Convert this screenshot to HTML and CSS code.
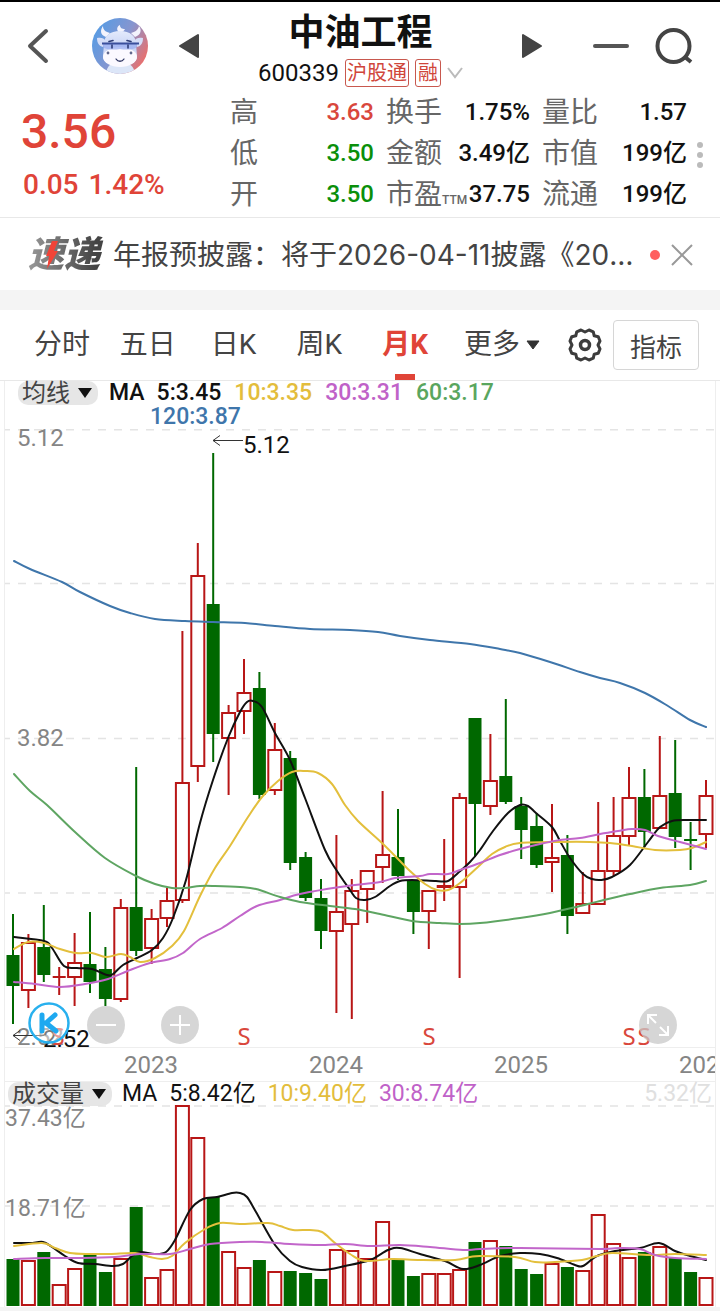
FILE: index.html
```html
<!DOCTYPE html>
<html lang="zh-CN">
<head>
<meta charset="utf-8">
<meta name="viewport" content="width=device-width, initial-scale=1">
<title>中油工程 600339</title>
<link rel="stylesheet" href="styles.css">
</head>
<body>
<main class="page">
  <header class="topbar">
    <button class="icon-btn back" aria-label="返回">
      <svg width="22" height="36" viewBox="0 0 22 36"><path d="M19 3 3 18l16 15" fill="none" stroke="#555" stroke-width="4" stroke-linecap="round" stroke-linejoin="round"/></svg>
    </button>
    <svg class="avatar" width="56" height="56" viewBox="0 0 56 56" role="img" aria-label="头像">
      <defs>
        <linearGradient id="sky" x1="0.1" y1="0.2" x2="1" y2="0.7"><stop offset="0" stop-color="#5b9be2"/><stop offset=".5" stop-color="#8795cf"/><stop offset="1" stop-color="#ee6d68"/></linearGradient>
        <linearGradient id="fur" x1="0" y1="0" x2="0" y2="1"><stop offset="0" stop-color="#e4ebfc"/><stop offset=".5" stop-color="#c6d2f5"/><stop offset="1" stop-color="#f8f5fb"/></linearGradient>
        <clipPath id="round"><circle cx="28" cy="28" r="28"/></clipPath>
      </defs>
      <g clip-path="url(#round)">
        <path fill="url(#sky)" d="M0 0h56v56H0z"/>
        <path d="M14 58c0-9 4-14 14-14s15 5 15 14z" fill="#dce6f8"/>
        <path d="M14 19c-6-2-6-7-3-11 0 4 3 6 7 7zM43 19c6-2 7-7 4-11-1 4-4 6-8 7zM27 14c-3-2-2-6 1-7 0 3 2 4 5 4-1 2-3 4-6 3z" fill="#f3f3fd"/>
        <path d="M5 20c4-1 7 0 9 3l-3 6c-4-1-6-4-6-9zM51 20c-4-1-7 0-9 3l3 6c4-1 6-4 6-9z" fill="#d6def8"/>
        <path d="M12 26c0-8 6-13 16-13s16 5 16 13l1 12c0 7-7 9-17 9s-17-2-17-9z" fill="url(#fur)"/>
        <ellipse cx="28" cy="39" rx="17" ry="10" fill="#fbf9ff"/>
        <path d="M11 25h34v4c-3 3-12 3-17 2-6 1-14 1-17-2z" fill="#9aaef0" opacity=".75"/>
        <path d="M10 25.500h37" stroke="#3a4f9c" stroke-width="1.800"/>
        <path d="M17 23.500l4-1M35 22.500l4 1M20 27v3M36 27v3" stroke="#2e3c77" stroke-width="1.600" stroke-linecap="round"/>
        <circle cx="16" cy="35" r="1.400" fill="#60678d"/><circle cx="39" cy="35" r="1.400" fill="#60678d"/>
        <path d="M24 41c2 3 6 3 8 0" fill="none" stroke="#333a66" stroke-width="1.300" stroke-linecap="round"/>
      </g>
    </svg>
    <button class="icon-btn prev" aria-label="上一只">
      <svg width="22" height="26" viewBox="0 0 22 26"><path d="M20 2v22L2 13z" fill="#444" stroke="#444" stroke-width="2" stroke-linejoin="round"/></svg>
    </button>
    <div class="stock">
      <h1 class="stock-name">中油工程</h1>
      <div class="stock-meta">
        <span class="stock-code">600339</span>
        <span class="tag">沪股通</span>
        <span class="tag">融</span>
        <svg width="16" height="12" viewBox="0 0 16 12"><path d="M1 1l7 9 7-9" fill="none" stroke="#bbb" stroke-width="2"/></svg>
      </div>
    </div>
    <button class="icon-btn next" aria-label="下一只">
      <svg width="22" height="26" viewBox="0 0 22 26"><path d="M2 2v22l18-11z" fill="#444" stroke="#444" stroke-width="2" stroke-linejoin="round"/></svg>
    </button>
    <button class="icon-btn minus" aria-label="移除自选">
      <svg width="36" height="4" viewBox="0 0 36 4"><rect width="36" height="4" rx="2" fill="#555"/></svg>
    </button>
    <button class="icon-btn" aria-label="搜索">
      <svg width="38" height="38" viewBox="0 0 38 38"><circle cx="18.500" cy="19" r="16" fill="none" stroke="#444" stroke-width="4"/><path d="M30 30l6 5" stroke="#444" stroke-width="4"/></svg>
    </button>
  </header>

  <section class="quote">
    <div class="price-box">
      <div class="price">3.56</div>
      <div class="change"><span>0.05</span><span>1.42%</span></div>
    </div>
    <dl class="stats">
      <dt>高</dt><dd class="up">3.63</dd><dt>换手</dt><dd>1.75%</dd><dt>量比</dt><dd>1.57</dd>
      <dt>低</dt><dd class="down">3.50</dd><dt>金额</dt><dd>3.49亿</dd><dt>市值</dt><dd>199亿</dd>
      <dt>开</dt><dd class="down">3.50</dd><dt>市盈<small class="ttm">TTM</small></dt><dd>37.75</dd><dt>流通</dt><dd>199亿</dd>
    </dl>
    <button class="icon-btn dots" aria-label="更多数据">
      <svg width="8" height="28" viewBox="0 0 8 28" fill="#bbb"><circle cx="4" cy="4" r="3"/><circle cx="4" cy="14" r="3"/><circle cx="4" cy="24" r="3"/></svg>
    </button>
  </section>

  <section class="news">
    <span class="news-logo">速递
      <svg class="bolt" width="12" height="28" viewBox="0 0 12 28"><path d="M6 0h6L8 10h4L1 28l2-13H0z" fill="#f04438"/></svg>
    </span>
    <p class="news-text">年报预披露：将于2026-04-11披露《2025年年度报告》</p>
    <span class="news-dot"></span>
    <button class="icon-btn" aria-label="关闭">
      <svg width="22" height="22" viewBox="0 0 22 22"><path d="M1 1l20 20M21 1L1 21" stroke="#999" stroke-width="2"/></svg>
    </button>
  </section>

  <nav class="tabs">
    <button class="tab">分时</button>
    <button class="tab">五日</button>
    <button class="tab">日K</button>
    <button class="tab">周K</button>
    <button class="tab active">月K</button>
    <button class="tab more">更多<svg width="14" height="10" viewBox="0 0 14 10"><path d="M1 1h12L7 9z" fill="#333" stroke="#333" stroke-linejoin="round"/></svg></button>
    <button class="icon-btn gear" aria-label="设置">
      <svg width="34" height="34" viewBox="-17 -17 34 34" fill="none" stroke="#3c3c3c" stroke-linejoin="round">
        <path stroke-width="3" d="M0-13 4-15 8.300-13.200 9.200-9.200 13.200-8.300 15-4 13 0 15 4 13.200 8.300 9.200 9.200 8.300 13.200 4 15 0 13-4 15-8.300 13.200-9.200 9.200-13.200 8.300-15 4-13 0-15-4-13.200-8.300-9.200-9.200-8.300-13.200-4-15z"/>
        <circle r="4.500" stroke-width="3.500"/>
      </svg>
    </button>
    <button class="indicator">指标</button>
  </nav>

  <section class="chart">
    <div class="legend">
      <button class="pill">均线<svg width="14" height="10" viewBox="0 0 14 10"><path d="M0 0h14L7 10z" fill="#111"/></svg></button>
      <div class="legend-items">
        <span class="ma">MA</span>
        <span class="legend-rest"><span class="m5">5:3.45</span><span class="m10">10:3.35</span><span class="m30">30:3.31</span><span class="m60">60:3.17</span></span>
        <span class="m120">120:3.87</span>
      </div>
    </div>
    <div class="plot">
      <svg id="price" class="canvas" viewBox="5 429 710 652" role="img" aria-label="月K线图"></svg>
      <span class="k-badge"><svg width="42" height="42" viewBox="0 0 42 42"><circle cx="21" cy="21" r="19.500" fill="#fff" fill-opacity=".45" stroke="#28b0ee" stroke-width="2.500"/><path d="M14 13v16M27 13l-9 8 10 8M14 21h4" fill="none" stroke="#1fa9f0" stroke-width="5" stroke-linecap="round" stroke-linejoin="round"/></svg></span>
      <button class="round-btn zoom-out" aria-label="缩小"><svg width="20" height="20" viewBox="0 0 20 20"><path d="M0 10h20" stroke="#fff" stroke-width="2"/></svg></button>
      <button class="round-btn zoom-in" aria-label="放大"><svg width="20" height="20" viewBox="0 0 20 20"><path d="M0 10h20M10 0v20" stroke="#fff" stroke-width="2"/></svg></button>
      <button class="round-btn expand" aria-label="全屏"><svg width="22" height="22" viewBox="0 0 22 22"><path d="M1 10V1h9M1 1l8 8M21 12v9h-9M21 21l-8-8" fill="none" stroke="#fff" stroke-width="2"/></svg></button>
    </div>
    <div class="legend volume-legend">
      <button class="pill">成交量<svg width="14" height="10" viewBox="0 0 14 10"><path d="M0 0h14L7 10z" fill="#111"/></svg></button>
      <span class="ma">MA</span>
      <span class="m5">5:8.42亿</span><span class="m10">10:9.40亿</span><span class="m30">30:8.74亿</span>
      <span class="last">5.32亿</span>
    </div>
    <svg id="volume" class="canvas" viewBox="5 1105 710 202" role="img" aria-label="成交量图"></svg>
  </section>
</main>
<script src="chart.js"></script>
</body>
</html>
```
FILE: styles.css
```css
* { box-sizing: border-box; }

body {
  margin: 0;
  background: #f4f4f4;
  color: #111;
  font-family: Roboto, "Noto Sans CJK SC", sans-serif;
  font-size: 24px;
}

button {
  font: inherit;
  color: inherit;
  border: 0;
  padding: 0;
  background: none;
}

svg { display: block; flex: none; }

.page {
  background: #fff;
  border-top: 2px solid #000;
}

.icon-btn {
  display: flex;
  align-items: center;
  justify-content: center;
  flex: none;
}

/* top bar */
.topbar {
  display: flex;
  align-items: center;
  height: 88px;
  padding: 0 27px;
}

.avatar { margin-left: 43px; }
.prev { margin-left: 30px; }
.minus { margin: 0 26px 0 50px; }

.stock {
  flex: 1;
  align-self: flex-start;
  display: flex;
  flex-direction: column;
  align-items: center;
  padding-top: 10px;
}

.stock-name {
  margin: 0;
  font-size: 36px;
  line-height: 42px;
  font-weight: 700;
}

.stock-meta {
  display: flex;
  align-items: center;
  gap: 6px;
  height: 38px;
}

.stock-code { font-size: 24px; }

.tag {
  border: 1px solid #c8584e;
  border-radius: 3px;
  padding: 0 1px;
  font-size: 20px;
  line-height: 26px;
  color: #d0463b;
}

.tag + .tag { padding: 0 2px; }

/* quote */
.quote {
  display: flex;
  height: 128px;
  padding: 2px 16px 0 21px;
  border-bottom: 1px solid #e8e8e8;
}

.price-box {
  width: 209px;
  padding-top: 14px;
  color: #e04438;
  font-weight: 500;
}

.price {
  font-size: 48px;
  line-height: 52px;
}

.change {
  display: flex;
  gap: 10px;
  padding-left: 2px;
  font-size: 28px;
  line-height: 54px;
}

.stats {
  flex: 1;
  display: grid;
  grid-template-columns: 28px 116px 67px 89px 67px 1fr;
  grid-auto-rows: 41px;
  margin: 0;
  line-height: 41px;
}

.stats dt {
  font-size: 28px;
  color: #666;
  white-space: nowrap;
}

.stats dt:nth-of-type(3n + 2),
.stats dt:nth-of-type(3n) { margin-left: 12px; }

.stats dd {
  margin: 0;
  font-weight: 500;
  text-align: right;
  white-space: nowrap;
}

.ttm { font-size: 12px; font-weight: 500; }
.stats .up { color: #d9473c; }
.stats .down { color: #0a8f0a; }
.dots { padding-left: 9px; }

/* news */
.news {
  display: flex;
  align-items: center;
  height: 72px;
  padding: 2px 27px 0 28px;
}

.news-logo {
  position: relative;
  flex: none;
  width: 85px;
  font-size: 36px;
  line-height: 40px;
  font-style: italic;
  font-weight: 900;
  color: transparent;
  background: linear-gradient(90deg, #999, #444 80%);
  background-clip: text;
  -webkit-background-clip: text;
}

.bolt {
  position: absolute;
  left: 18px;
  top: 6px;
}

.news-text {
  flex: 1;
  min-width: 0;
  margin: 0;
  font-family: Inter, "Noto Sans CJK SC", sans-serif;
  font-size: 28px;
  line-height: 40px;
  color: #444;
  white-space: nowrap;
  overflow: hidden;
  text-overflow: ellipsis;
}

.news-dot {
  flex: none;
  width: 10px;
  height: 10px;
  margin: 0 11px 0 12px;
  border-radius: 50%;
  background: #ff5f5f;
}

/* period tabs */
.tabs {
  display: flex;
  align-items: stretch;
  height: 91px;
  padding: 0 21px 0 19px;
  border-top: 20px solid #f4f4f4;
  border-bottom: 1px solid #e8e8e8;
}

.tab {
  position: relative;
  flex: 1;
  font-size: 28px;
  line-height: 68px;
  color: #444;
  white-space: nowrap;
}

.tab.active { font-weight: 700; color: #e04438; }

.tab.active::after {
  content: "";
  position: absolute;
  left: 50%;
  bottom: 0;
  width: 20px;
  height: 6px;
  margin-left: -10px;
  background: #e04438;
}

.tab.more {
  flex: none;
  display: flex;
  align-items: center;
  gap: 6px;
  margin: 0 28px 0 16px;
}

.gear { margin-right: 11px; }

.indicator {
  align-self: center;
  width: 86px;
  height: 50px;
  border: 1px solid #d6d6d6;
  border-radius: 4px;
  font-size: 26px;
  color: #444;
}

/* charts */
.chart {
  margin: 0 4px;
  border: solid #eee;
  border-width: 0 1px;
}

.canvas { width: 100%; height: auto; }

.legend {
  display: flex;
  align-items: flex-start;
  height: 48px;
  padding-left: 13px;
  font-size: 23px;
  line-height: 24px;
  font-weight: 500;
  white-space: nowrap;
}

.pill {
  display: flex;
  align-items: center;
  gap: 8px;
  height: 24px;
  margin-right: 11px;
  padding: 0 6px 0 4px;
  border-radius: 10px;
  background: #e6e6e6;
  color: #444;
  font-size: 24px;
  font-weight: 400;
  line-height: 24px;
}

.legend-items {
  display: grid;
  grid-template-columns: auto auto;
  column-gap: 12px;
}

.legend-rest { display: flex; gap: 13px; }
.m120 { grid-column: 1 / -1; padding-left: 41px; color: #3f76ab; }
.m10 { color: #e3bd3c; }
.m30 { color: #c062c8; }
.m60 { color: #5aa65e; }

.volume-legend {
  height: 24px;
  gap: 12px;
  padding: 0 3px 0 3px;
  border-top: 1px solid #eee;
  font-weight: 400;
}

.volume-legend .pill { margin-right: -2px; }
.last { margin-left: auto; color: #e0e0e0; }

.plot { position: relative; }

.k-badge,
.round-btn {
  position: absolute;
  bottom: 37px;
}

.k-badge { left: 23px; }

.round-btn {
  display: flex;
  align-items: center;
  justify-content: center;
  width: 38px;
  height: 38px;
  border-radius: 50%;
  background: rgba(200, 200, 200, 0.75);
}

.zoom-out { left: 82px; }
.zoom-in { left: 156px; }
.expand { right: 38px; }

.grid-line { stroke: #e4e4e4; stroke-width: 1.5; stroke-dasharray: 8 8; }
.frame-line { stroke: #eee; stroke-width: 1; }
.wick-up { stroke: #b81616; stroke-width: 2; fill: none; }
.body-up { stroke: #b81616; stroke-width: 2; fill: #fff; }
.wick-down { stroke: #006800; stroke-width: 2; fill: none; }
.body-down { fill: #006800; }
.line { fill: none; stroke-width: 2; stroke-linecap: round; }
.line-5 { stroke: #111; }
.line-10 { stroke: #e3bf3c; }
.line-30 { stroke: #c266ca; }
.line-60 { stroke: #5ea562; }
.line-120 { stroke: #3f76ab; }
.axis { fill: #858585; }
#volume .axis { font-size: 23px; }
.extreme { fill: #111; }
.signal { fill: #d9473c; font-family: "Noto Sans", sans-serif; }
.pointer { fill: none; stroke: #333; stroke-width: 1; }
```
FILE: chart.js
```js
const NS = 'http://www.w3.org/2000/svg';
const price = document.getElementById('price');
const volume = document.getElementById('volume');
const STEP = 15.4, FIRST = 13;

function add(parent, tag, attrs, text) {
  const el = document.createElementNS(NS, tag);
  for (const key in attrs) el.setAttribute(key, attrs[key]);
  if (text) el.textContent = text;
  parent.appendChild(el);
}

// month: [up or down, high, body top, body bottom, low, volume top]
const months = [
  ['d', 914, 955, 986, 1024, 1259], ['u', 934, 942, 991, 1008, 1260],
  ['d', 905, 947, 975, 982, 1252], ['u', 967, 977, 977, 995, 1284],
  ['u', 933, 962, 978, 1006, 1268], ['d', 912, 964, 982, 993, 1255],
  ['d', 947, 969, 999, 1006, 1272], ['u', 899, 907, 1000, 1002, 1258],
  ['d', 767, 907, 951, 956, 1207], ['u', 909, 918, 949, 964, 1277],
  ['u', 888, 900, 919, 927, 1269], ['u', 631, 782, 901, 903, 1105],
  ['u', 543, 575, 767, 782, 1137], ['d', 453, 604, 734, 762, 1197],
  ['u', 705, 712, 739, 795, 1251], ['u', 659, 692, 712, 734, 1267],
  ['d', 672, 688, 795, 799, 1260], ['u', 723, 749, 791, 795, 1271],
  ['d', 751, 758, 863, 870, 1271], ['d', 852, 857, 898, 901, 1273],
  ['d', 879, 898, 931, 949, 1279], ['u', 835, 911, 932, 1013, 1249],
  ['u', 879, 890, 925, 1019, 1250], ['u', 870, 870, 890, 923, 1258],
  ['u', 791, 854, 868, 883, 1221], ['d', 809, 857, 876, 880, 1259],
  ['d', 880, 880, 912, 934, 1276], ['u', 890, 890, 912, 949, 1273],
  ['u', 839, 885, 888, 901, 1273], ['u', 793, 797, 888, 978, 1269],
  ['d', 718, 718, 804, 857, 1242], ['u', 734, 780, 807, 815, 1240],
  ['d', 699, 776, 802, 804, 1246], ['d', 797, 806, 830, 859, 1269],
  ['d', 813, 826, 865, 868, 1274], ['u', 804, 857, 863, 892, 1263],
  ['d', 835, 855, 916, 934, 1267], ['u', 872, 903, 914, 914, 1270],
  ['u', 802, 870, 905, 905, 1214], ['u', 797, 835, 872, 876, 1243],
  ['u', 767, 797, 837, 845, 1257], ['d', 769, 797, 832, 847, 1252],
  ['u', 736, 795, 829, 829, 1246], ['d', 740, 793, 837, 848, 1258],
  ['d', 822, 840, 840, 870, 1272], ['u', 780, 795, 835, 848, 1277]
];

const priceLines = {
  5: [14,937, 44,941, 52,948, 64,966, 77,968, 92,969, 107,975, 113,974, 123,965, 137,958, 152,950, 163,938, 173,918, 186,880, 200,823, 213,780, 228,738, 240,712, 247,702, 253,701, 262,707, 275,733, 290,760, 305,798, 325,850, 337,871, 350,890, 356,898, 365,900, 375,897, 390,886, 400,881, 412,880, 436,881, 448,881, 458,873, 470,862, 480,850, 493,831, 508,813, 520,805, 528,806, 536,813, 552,827, 560,841, 570,858, 583,874, 592,879, 601,880, 612,877, 630,865, 648,842, 660,827, 672,821, 688,820, 706,820],
  10: [14,949, 28,942, 44,943, 60,949, 76,953, 92,953, 106,957, 121,954, 130,957, 140,962, 155,958, 172,946, 184,931, 200,896, 215,868, 230,846, 248,817, 262,797, 278,781, 292,772, 305,771, 318,773, 332,784, 345,805, 358,821, 382,843, 400,861, 410,871, 425,884, 437,890, 448,890, 460,883, 480,865, 492,854, 505,847, 520,843, 560,842, 590,842, 610,843, 632,846, 655,850, 680,850, 692,848, 706,842],
  30: [14,982, 35,984, 60,987, 85,984, 108,979, 130,970, 150,963, 170,959, 183,953, 200,939, 222,928, 240,916, 257,906, 280,900, 300,894, 340,887, 380,882, 395,878, 420,876, 430,874, 448,874, 460,870, 480,863, 500,855, 520,849, 540,844, 560,840, 580,838, 600,834, 618,831, 632,829, 645,830, 658,836, 680,842, 695,846, 706,849],
  60: [14,774, 30,791, 47,805, 75,832, 105,858, 136,876, 155,884, 172,888, 185,888, 200,886, 215,886, 240,887, 256,889, 280,897, 300,902, 330,906, 355,909, 380,914, 412,921, 440,923, 460,924, 480,923, 520,918, 550,913, 580,906, 600,901, 630,894, 660,888, 690,885, 706,881],
  120: [14,561, 30,569, 62,582, 80,592, 110,606, 130,613, 155,619, 185,621, 213,622, 245,623, 275,626, 310,629, 350,630, 378,632, 400,636, 430,640, 470,644, 500,649, 520,653, 550,662, 580,672, 600,678, 620,683, 645,693, 668,706, 690,720, 706,727]
};

const volumeLines = {
  5: [14,1243, 30,1243, 43,1242, 52,1247, 65,1256, 78,1263, 95,1264, 113,1266, 123,1264, 132,1256, 140,1252, 155,1254, 166,1252, 175,1240, 190,1210, 203,1199, 217,1197, 232,1193, 240,1193, 247,1197, 256,1212, 275,1245, 290,1261, 302,1267, 322,1270, 345,1266, 370,1260, 388,1250, 400,1248, 420,1254, 445,1261, 463,1269, 480,1265, 500,1256, 520,1253, 540,1254, 557,1258, 575,1265, 583,1266, 597,1256, 615,1251, 640,1248, 659,1243, 675,1251, 690,1256, 706,1260],
  10: [14,1246, 42,1243, 55,1248, 70,1253, 90,1254, 110,1254, 135,1253, 150,1257, 162,1259, 172,1256, 185,1243, 205,1229, 220,1223, 240,1224, 268,1223, 280,1226, 293,1230, 310,1230, 322,1232, 335,1243, 350,1254, 365,1261, 392,1259, 420,1260, 455,1260, 470,1257, 480,1256, 515,1257, 535,1262, 555,1262, 582,1260, 597,1256, 612,1253, 650,1255, 675,1254, 706,1255],
  30: [14,1259, 45,1258, 80,1258, 115,1257, 140,1254, 170,1254, 190,1249, 210,1244, 240,1242, 262,1242, 290,1244, 320,1245, 345,1244, 370,1246, 400,1245, 430,1247, 463,1250, 480,1249, 520,1248, 600,1249, 620,1248, 640,1249, 655,1255, 675,1258, 706,1259]
};

function smooth(flat) {
  const p = [];
  for (let i = 0; i < flat.length; i += 2) p.push([flat[i], flat[i + 1]]);
  let d = `M${p[0]}`;
  for (let i = 0; i < p.length - 1; i++) {
    const a = p[i - 1] || p[i], b = p[i], c = p[i + 1], e = p[i + 2] || c;
    d += `C${b[0] + (c[0] - a[0]) / 6} ${b[1] + (c[1] - a[1]) / 6} ${c[0] - (e[0] - b[0]) / 6} ${c[1] - (e[1] - b[1]) / 6} ${c}`;
  }
  return d;
}

function lines(svg, set) {
  for (const key of [5, 10, 30, 60, 120]) {
    if (set[key]) add(svg, 'path', { class: `line line-${key}`, d: smooth(set[key]) });
  }
}

function label(svg, cls, x, y, text, anchor = 'start') {
  add(svg, 'text', { class: cls, x, y, 'text-anchor': anchor }, text);
}

function box(svg, up, x, top, bottom) {
  if (up) add(svg, 'rect', { class: 'body-up', x: x - 6.5, y: top + 1, width: 13, height: Math.max(bottom - top - 2, 1) });
  else add(svg, 'rect', { class: 'body-down', x: x - 6.5, y: top, width: 13, height: bottom - top });
}

for (const y of [429.8, 583.5, 738.5, 893]) add(price, 'path', { class: 'grid-line', d: `M2 ${y}H716` });
add(price, 'path', { class: 'frame-line', d: 'M5 1047.5H716' });
for (const y of [1106, 1206]) add(volume, 'path', { class: 'grid-line', d: `M2 ${y}H716` });

label(price, 'axis', 17, 446, '5.12');
label(price, 'axis', 17, 746, '3.82');
label(price, 'axis', 17, 1045, '2.52');

months.forEach(([dir, high, top, bottom, low, vol], i) => {
  const x = FIRST + STEP * i, up = dir === 'u', wick = up ? 'wick-up' : 'wick-down';
  if (top === bottom) {
    add(price, 'path', { class: wick, d: `M${x} ${high}V${low}M${x - 6.5} ${top}h13` });
  } else {
    add(price, 'path', { class: wick, d: `M${x} ${high}V${top}M${x} ${bottom}V${low}` });
    box(price, up, x, top, bottom);
  }
  box(volume, up, x, vol, 1306);
});

label(volume, 'axis', 5, 1126, '37.43亿');
label(volume, 'axis', 5, 1216, '18.71亿');
lines(price, priceLines);
lines(volume, volumeLines);

add(price, 'path', { class: 'pointer', d: 'M243 440.5H213M220 435.500l-7 5 7 5' });
label(price, 'extreme', 243, 453, '5.12');
add(price, 'path', { class: 'pointer', d: 'M44 1035.5H13M20 1030.500l-7 5 7 5' });
label(price, 'extreme', 43, 1047, '2.52');
for (const x of [58, 244, 429, 629, 644]) label(price, 'signal', x, 1045, 'S', 'middle');

['2023', '2024', '2025', '2026'].forEach((year, i) => label(price, 'axis', 151 + i * 185, 1073, year, 'middle'));
```
